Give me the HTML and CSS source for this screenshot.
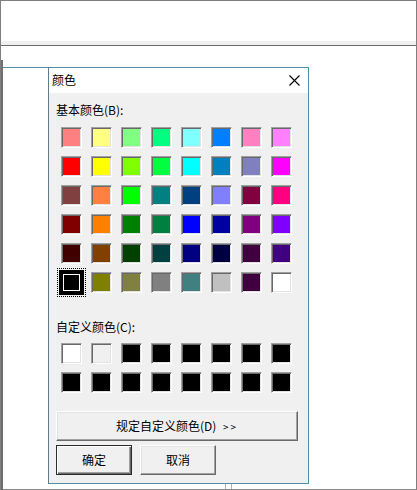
FILE: index.html
```html
<!DOCTYPE html>
<html lang="zh-CN">
<head>
<meta charset="utf-8">
<title>颜色</title>
<link rel="stylesheet" href="styles.css">
</head>
<body>
<div class="frame">
  <div class="topbar"></div>
  <div class="band"></div>
  <div class="stage">
    <div class="parent">
      <div class="win-row">
        <div class="backwin"></div>
        <div class="dialog">
          <div class="titlebar">
            <span class="title">颜色</span>
            <span class="close">
              <svg width="11" height="11" viewBox="0 0 11 11"><path d="M0.5 0.5 L10.5 10.5 M10.5 0.5 L0.5 10.5" stroke="#000" stroke-width="1.1" fill="none"/></svg>
            </span>
          </div>
          <div class="body">
            <div class="label">基本颜色(B):</div>
            <div class="grid basic">
              <span class="sw" style="background:#ff8080"></span>
              <span class="sw" style="background:#ffff80"></span>
              <span class="sw" style="background:#80ff80"></span>
              <span class="sw" style="background:#00ff80"></span>
              <span class="sw" style="background:#80ffff"></span>
              <span class="sw" style="background:#0080ff"></span>
              <span class="sw" style="background:#ff80c0"></span>
              <span class="sw" style="background:#ff80ff"></span>

              <span class="sw" style="background:#ff0000"></span>
              <span class="sw" style="background:#ffff00"></span>
              <span class="sw" style="background:#80ff00"></span>
              <span class="sw" style="background:#00ff40"></span>
              <span class="sw" style="background:#00ffff"></span>
              <span class="sw" style="background:#0080c0"></span>
              <span class="sw" style="background:#8080c0"></span>
              <span class="sw" style="background:#ff00ff"></span>

              <span class="sw" style="background:#804040"></span>
              <span class="sw" style="background:#ff8040"></span>
              <span class="sw" style="background:#00ff00"></span>
              <span class="sw" style="background:#008080"></span>
              <span class="sw" style="background:#004080"></span>
              <span class="sw" style="background:#8080ff"></span>
              <span class="sw" style="background:#800040"></span>
              <span class="sw" style="background:#ff0080"></span>

              <span class="sw" style="background:#800000"></span>
              <span class="sw" style="background:#ff8000"></span>
              <span class="sw" style="background:#008000"></span>
              <span class="sw" style="background:#008040"></span>
              <span class="sw" style="background:#0000ff"></span>
              <span class="sw" style="background:#0000a0"></span>
              <span class="sw" style="background:#800080"></span>
              <span class="sw" style="background:#8000ff"></span>

              <span class="sw" style="background:#400000"></span>
              <span class="sw" style="background:#804000"></span>
              <span class="sw" style="background:#004000"></span>
              <span class="sw" style="background:#004040"></span>
              <span class="sw" style="background:#000080"></span>
              <span class="sw" style="background:#000040"></span>
              <span class="sw" style="background:#400040"></span>
              <span class="sw" style="background:#400080"></span>

              <span class="sw sel" style="background:#000000"></span>
              <span class="sw" style="background:#808000"></span>
              <span class="sw" style="background:#808040"></span>
              <span class="sw" style="background:#808080"></span>
              <span class="sw" style="background:#408080"></span>
              <span class="sw" style="background:#c0c0c0"></span>
              <span class="sw" style="background:#400040"></span>
              <span class="sw" style="background:#ffffff"></span>
            </div>
            <div class="label label-custom">自定义颜色(C):</div>
            <div class="grid custom">
              <span class="sw" style="background:#ffffff"></span>
              <span class="sw" style="background:#f0f0f0"></span>
              <span class="sw" style="background:#000000"></span>
              <span class="sw" style="background:#000000"></span>
              <span class="sw" style="background:#000000"></span>
              <span class="sw" style="background:#000000"></span>
              <span class="sw" style="background:#000000"></span>
              <span class="sw" style="background:#000000"></span>
              <span class="sw" style="background:#000000"></span>
              <span class="sw" style="background:#000000"></span>
              <span class="sw" style="background:#000000"></span>
              <span class="sw" style="background:#000000"></span>
              <span class="sw" style="background:#000000"></span>
              <span class="sw" style="background:#000000"></span>
              <span class="sw" style="background:#000000"></span>
              <span class="sw" style="background:#000000"></span>
            </div>
            <button class="btn wide">规定自定义颜色(D) <span class="arrows">&gt;&gt;</span></button>
            <div class="actions">
              <button class="btn default">确定</button>
              <button class="btn">取消</button>
            </div>
          </div>
        </div>
      </div>
      <div class="footer-strip">
        <span class="grip"></span>
      </div>
    </div>
  </div>
</div>
</body>
</html>
```

FILE: styles.css
```css
* { box-sizing: border-box; }

html, body {
  margin: 0;
  padding: 0;
  background: #ffffff;
}

body {
  font-family: "Noto Sans CJK SC", "Noto Sans", sans-serif;
  font-size: 12px;
  color: #000;
}

.frame {
  width: 417px;
  height: 490px;
  border: 1px solid #7f7f7f;
  border-bottom: none;
  display: flex;
  flex-direction: column;
  background: #fff;
  overflow: hidden;
}

.topbar {
  height: 40px;
  background: #fff;
  flex: none;
}

.band {
  height: 5px;
  background: #f0f0f0;
  border-bottom: 1px solid #6d6d6d;
  flex: none;
}

.stage {
  flex: 1;
  display: flex;
  flex-direction: column;
  padding-top: 14px;
}

.parent {
  flex: 1;
  display: flex;
  flex-direction: column;
  border-left: 2px solid #707070;
  padding-top: 7px;
}

.win-row {
  display: flex;
  align-items: flex-start;
  flex: none;
}

.backwin {
  width: 45px;
  border-top: 1px solid #4f8fa3;
}

.dialog {
  width: 261px;
  height: 417px;
  border: 1px solid #4f8fa3;
  border-left-color: #5e7d88;
  background: #f0f0f0;
  display: flex;
  flex-direction: column;
}

.titlebar {
  height: 25px;
  background: #fff;
  display: flex;
  align-items: center;
  justify-content: space-between;
  padding-left: 3px;
  flex: none;
}

.title {
  line-height: 16px;
  margin-top: -2px;
}

.close {
  width: 28px;
  height: 25px;
  display: flex;
  align-items: center;
  justify-content: center;
  margin-top: -1px;
}

.close svg { display: block; }

.body {
  padding: 9px 0 0 7px;
  display: flex;
  flex-direction: column;
  align-items: flex-start;
}

.label {
  line-height: 16px;
  height: 16px;
}

.grid {
  display: grid;
  grid-template-columns: repeat(8, 21px);
  grid-auto-rows: 21px;
  column-gap: 9px;
  row-gap: 8px;
  margin-left: 5px;
}

.basic { margin-top: 9px; }

.label-custom { margin-top: 26px; }

.custom { margin-top: 8px; }

.sw {
  display: block;
  width: 21px;
  height: 21px;
  border: 1px solid;
  border-color: #a0a0a0 #ffffff #ffffff #a0a0a0;
  box-shadow: inset 1px 1px 0 #696969, inset -1px -1px 0 #e3e3e3;
}

.sw.sel {
  border: none;
  box-shadow: inset 0 0 0 2px #000, inset 0 0 0 3px #fff, 0 0 0 2px #000;
  outline: 1px dotted #000;
  outline-offset: 3px;
}

.btn {
  font-family: "Noto Sans CJK SC", "Noto Sans", sans-serif;
  font-size: 12px;
  color: #000;
  background: #f0f0f0;
  border: 1px solid;
  border-color: #ffffff #696969 #696969 #ffffff;
  box-shadow: inset -1px -1px 0 #a0a0a0, inset 1px 1px 0 #e3e3e3;
  padding: 0;
  margin: 0;
  height: 30px;
  line-height: 16px;
}

.wide {
  width: 242px;
  margin-top: 18px;
}

.arrows {
  font-size: 10px;
  letter-spacing: 2px;
  margin-left: 4px;
}

.actions {
  display: flex;
  gap: 8px;
  margin-top: 4px;
}

.actions .btn {
  width: 76px;
}

.btn.default {
  border: 1px solid #2b2b2b;
  box-shadow: inset 1px 1px 0 #ffffff, inset -1px -1px 0 #696969, inset -2px -2px 0 #a0a0a0;
}

.footer-strip {
  flex: 1;
  display: flex;
  align-items: flex-end;
  padding-left: 222px;
  border-bottom: 2px solid #8a8a8a;
  margin-bottom: 1px;
}

.grip {
  width: 7px;
  height: 5px;
  border-left: 1px solid #b0b0b0;
  border-right: 1px solid #b0b0b0;
}
```
